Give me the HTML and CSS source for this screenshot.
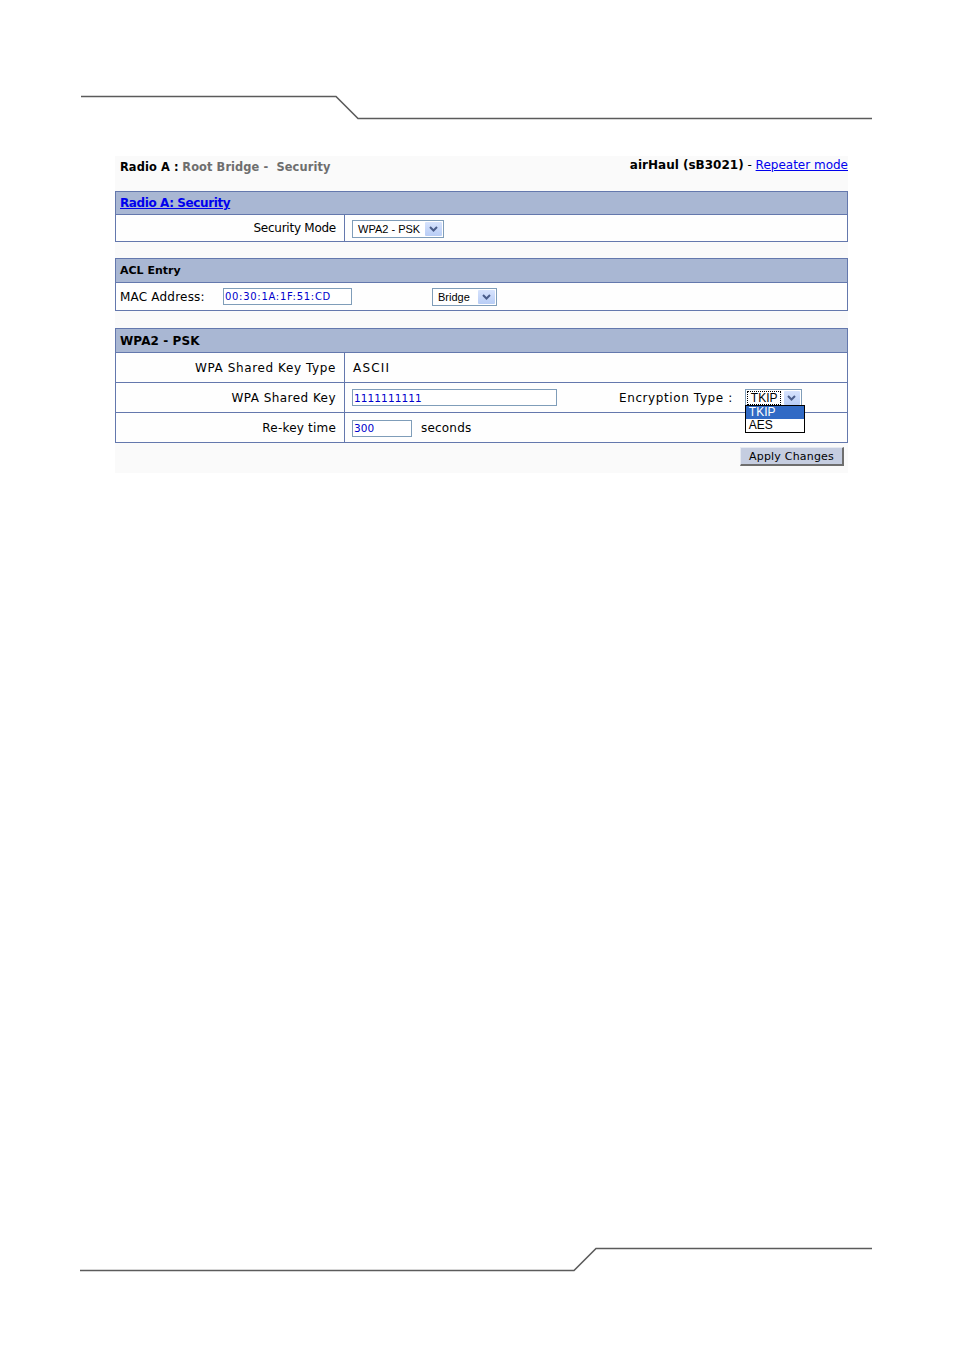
FILE: index.html
```html
<!DOCTYPE html>
<html>
<head>
<meta charset="utf-8">
<link rel="stylesheet" href="styles.css">
</head>
<body>
<div class="page">
  <svg class="rule rule-top" width="954" height="156" viewBox="0 0 954 156">
    <polyline points="81,96.5 336,96.5 358,118.5 872,118.5" fill="none" stroke="#5b5b5b" stroke-width="1.6"/>
  </svg>

  <div class="panel">
    <div class="titlebar">
      <div class="title-left"><b>Radio A :</b> <span class="muted">Root Bridge -&nbsp; Security</span></div>
      <div class="title-right"><b>airHaul (sB3021)</b> - <a href="#">Repeater mode</a></div>
    </div>

    <div class="box">
      <div class="box-head h1"><a href="#">Radio A: Security</a></div>
      <div class="row r1 last">
        <div class="lbl lbl-mode">Security Mode</div>
        <div class="val">
          <div class="select sel-mode"><span class="sel-text">WPA2 - PSK</span><span class="arrow"><svg width="9" height="6" viewBox="0 0 9 6"><polyline points="1,1 4.5,4.5 8,1" fill="none" stroke="#4a5d8a" stroke-width="2"/></svg></span></div>
        </div>
      </div>
    </div>

    <div class="box box-acl">
      <div class="box-head h2">ACL Entry</div>
      <div class="row r2 acl last">
        <span class="acl-lbl">MAC Address:</span>
        <span class="input in-mac">00:30:1A:1F:51:CD</span>
        <div class="select sel-bridge"><span class="sel-text">Bridge</span><span class="arrow"><svg width="9" height="6" viewBox="0 0 9 6"><polyline points="1,1 4.5,4.5 8,1" fill="none" stroke="#4a5d8a" stroke-width="2"/></svg></span></div>
      </div>
    </div>

    <div class="box box-psk">
      <div class="box-head h3">WPA2 - PSK</div>
      <div class="row r3">
        <div class="lbl lbl-type">WPA Shared Key Type</div>
        <div class="val"><span class="ascii">ASCII</span></div>
      </div>
      <div class="row r3">
        <div class="lbl lbl-key">WPA Shared Key</div>
        <div class="val">
          <span class="input in-key">1111111111</span>
          <span class="enc-lbl">Encryption Type :</span>
          <div class="select sel-enc"><span class="sel-text focus">TKIP</span><span class="arrow"><svg width="9" height="6" viewBox="0 0 9 6"><polyline points="1,1 4.5,4.5 8,1" fill="none" stroke="#4a5d8a" stroke-width="2"/></svg></span>
            <div class="dropdown">
              <div class="opt opt-sel">TKIP</div>
              <div class="opt">AES</div>
            </div>
          </div>
        </div>
      </div>
      <div class="row r3 last">
        <div class="lbl lbl-rekey">Re-key time</div>
        <div class="val">
          <span class="input in-rekey">300</span>
          <span class="unit">seconds</span>
        </div>
      </div>
    </div>

    <div class="actions">
      <button class="btn">Apply Changes</button>
    </div>
  </div>

  <svg class="rule rule-bottom" width="954" height="103" viewBox="0 1248 954 103">
    <polyline points="80,1270.5 574,1270.5 596,1248.5 872,1248.5" fill="none" stroke="#5b5b5b" stroke-width="1.6"/>
  </svg>
</div>
</body>
</html>
```

FILE: styles.css
```css
html, body {
  margin: 0;
  padding: 0;
  background: #ffffff;
}

body {
  font-family: "DejaVu Sans", Verdana, sans-serif;
  font-size: 12px;
  color: #000;
}

.page {
  width: 954px;
  min-height: 1351px;
  display: flex;
  flex-direction: column;
}

.rule {
  display: block;
  flex: none;
}

.rule-bottom {
  margin-top: auto;
  overflow: visible;
}

.panel {
  margin-left: 115px;
  width: 733px;
  background: #fafafa;
  padding-bottom: 7px;
}

.titlebar {
  display: flex;
  justify-content: space-between;
  height: 35px;
}

.title-left {
  padding: 3px 0 0 5px;
  line-height: 16px;
  font-size: 11.4px;
  letter-spacing: 0.1px;
}

.title-left b {
  font-weight: bold;
}

.muted {
  color: #6e6e6e;
  font-weight: bold;
}

.title-right {
  padding-top: 1px;
  line-height: 16px;
  font-size: 12px;
}

.title-right a {
  color: #0000ee;
  text-decoration: underline;
}

.box {
  border: 1px solid #6478ad;
  background: #fefefe;
  margin-bottom: 16px;
}

.box-acl {
  margin-bottom: 17px;
}

.box-psk {
  margin-bottom: 4px;
}

.box-head {
  background: #a9b7d3;
  border-bottom: 1px solid #6478ad;
  padding-left: 4px;
  display: flex;
  align-items: center;
  font-weight: bold;
}

.h1 {
  height: 22px;
  font-size: 12px;
  letter-spacing: -0.4px;
}

.h1 a {
  color: #0000ee;
  text-decoration: underline;
}

.h2 {
  height: 23px;
  font-size: 11px;
}

.h3 {
  height: 23px;
  font-size: 12px;
  letter-spacing: 0.1px;
}

.row {
  display: grid;
  grid-template-columns: 229px 1fr;
  border-bottom: 1px solid #6478ad;
}

.row.last {
  border-bottom: none;
}

.r1 {
  height: 26px;
}

.r2 {
  height: 27px;
}

.r3 {
  height: 29px;
}

.lbl {
  border-right: 1px solid #6478ad;
  display: flex;
  align-items: center;
  justify-content: flex-end;
  padding-right: 8px;
}

.lbl-mode {
  letter-spacing: -0.25px;
}

.lbl-type {
  letter-spacing: 0.6px;
}

.lbl-key {
  letter-spacing: 0.45px;
}

.lbl-rekey {
  letter-spacing: 0.2px;
}

.ascii {
  letter-spacing: 1.2px;
  padding-left: 1px;
}

.val {
  display: flex;
  align-items: center;
  padding-left: 7px;
  position: relative;
}

.acl {
  display: flex;
  align-items: center;
  padding-left: 4px;
}

.acl-lbl {
  width: 103px;
  letter-spacing: 0.2px;
}

.input {
  display: inline-flex;
  align-items: center;
  box-sizing: border-box;
  height: 17px;
  border: 1px solid #7f9db9;
  background: #fff;
  color: #0000cc;
  font-size: 10.5px;
  padding-left: 1px;
  letter-spacing: 0.1px;
}

.in-mac {
  width: 129px;
  font-size: 10px;
  letter-spacing: 0.7px;
}

.in-key {
  width: 205px;
}

.in-rekey {
  width: 60px;
  margin-top: 1px;
}

.unit {
  margin-left: 9px;
  letter-spacing: 0.2px;
}

.enc-lbl {
  margin-left: 62px;
  letter-spacing: 0.6px;
}

.select {
  position: relative;
  display: inline-flex;
  align-items: center;
  box-sizing: border-box;
  height: 18px;
  border: 1px solid #7f9db9;
  background: #fff;
  font-family: "Liberation Sans", Arial, sans-serif;
  font-size: 11px;
}

.sel-text {
  flex: 1;
  padding-left: 5px;
  white-space: nowrap;
}

.arrow {
  width: 17px;
  height: 14px;
  margin-right: 1px;
  background: linear-gradient(#d7e3fd, #b8cdf6);
  border-radius: 1px;
  display: flex;
  align-items: center;
  justify-content: center;
}

.sel-mode {
  width: 92px;
  margin-top: 2px;
}

.sel-bridge {
  width: 65px;
  margin-left: 80px;
}

.sel-enc {
  width: 57px;
  margin-left: 12px;
  height: 17px;
  margin-top: 0;
  font-size: 12px;
}

.focus {
  flex: none;
  border: 1px dotted #000;
  padding: 0 2px 0 3px;
  line-height: 12px;
  margin: 0 3px 0 1px;
}

.dropdown {
  position: absolute;
  left: -1px;
  top: 15px;
  width: 58px;
  border: 1px solid #000;
  background: #fff;
  font-size: 12px;
  z-index: 2;
}

.opt {
  height: 13px;
  line-height: 13px;
  padding-left: 3px;
}

.opt-sel {
  background: #316ac5;
  color: #fff;
}

.actions {
  display: flex;
  justify-content: flex-end;
  padding-right: 4px;
}

.btn {
  width: 104px;
  height: 19px;
  padding: 0;
  margin: 0;
  background: #c5cde0;
  border: 1px solid;
  border-color: #e6eaf2 #6e6e6e #6e6e6e #e6eaf2;
  border-width: 1px 2px 2px 1px;
  font-family: "DejaVu Sans", Verdana, sans-serif;
  font-size: 11px;
  color: #000;
  letter-spacing: 0.2px;
}
```
